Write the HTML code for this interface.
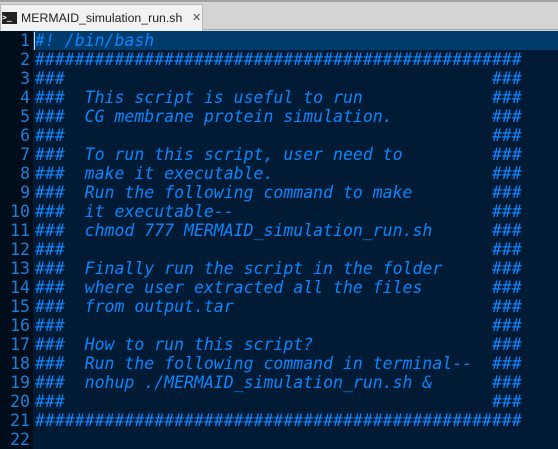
<!DOCTYPE html><html><head><style>
body{margin:0;width:558px;height:449px;overflow:hidden;background:#d4d4d4;font-family:"Liberation Sans",sans-serif}
.bar{position:absolute;left:0;top:0;width:558px;height:30px;background:#d4d4d4;border-top:2px solid #a0a0a0;border-bottom:1px solid #a8a8a8;box-sizing:border-box}
.tab{position:absolute;left:0;top:4px;width:203px;height:27px;background:#f2f2f2;border:1px solid #b8b8b8;border-bottom:none;box-sizing:border-box;font-size:12.3px;color:#222}
.tab .ic{position:absolute;left:1px;top:7px;width:15px;height:12px;background:#222;color:#fff;font:bold 8px "DejaVu Sans Mono",monospace;line-height:12px}
.tab .t{position:absolute;left:20px;top:6px}
.tab .x{position:absolute;left:191px;top:6px;font-size:11px;color:#555}
.ed{position:absolute;left:0;top:31px;width:558px;height:418px;background:#001b33}
.gut{position:absolute;left:0;top:0;width:33px;height:418px;background:#000d1a}
.hl{position:absolute;left:33px;top:0;width:525px;height:19px;background:#003b6b}
.cur{position:absolute;left:34px;top:1px;width:1px;height:18px;background:#ddd}
pre{margin:0;position:absolute;top:0;font:italic 16.5px "DejaVu Sans Mono",monospace;line-height:19px;color:#0a85ff}
.ln{left:0;width:30px;text-align:right;font-style:normal;color:#1a80d9}
.code{left:35px}
</style></head><body>
<div class="bar"></div>
<div class="tab"><div class="ic">&gt;_</div><span class="t">MERMAID_simulation_run.sh</span><span class="x">✕</span></div>
<div class="ed"><div class="gut"></div><div class="hl"></div><div class="cur"></div>
<pre class="ln">1
2
3
4
5
6
7
8
9
10
11
12
13
14
15
16
17
18
19
20
21
22</pre>
<pre class="code">#! /bin/bash
#################################################
###                                           ###
###  This script is useful to run             ###
###  CG membrane protein simulation.          ###
###                                           ###
###  To run this script, user need to         ###
###  make it executable.                      ###
###  Run the following command to make        ###
###  it executable--                          ###
###  chmod 777 MERMAID_simulation_run.sh      ###
###                                           ###
###  Finally run the script in the folder     ###
###  where user extracted all the files       ###
###  from output.tar                          ###
###                                           ###
###  How to run this script?                  ###
###  Run the following command in terminal--  ###
###  nohup ./MERMAID_simulation_run.sh &      ###
###                                           ###
#################################################
</pre></div>
</body></html>
